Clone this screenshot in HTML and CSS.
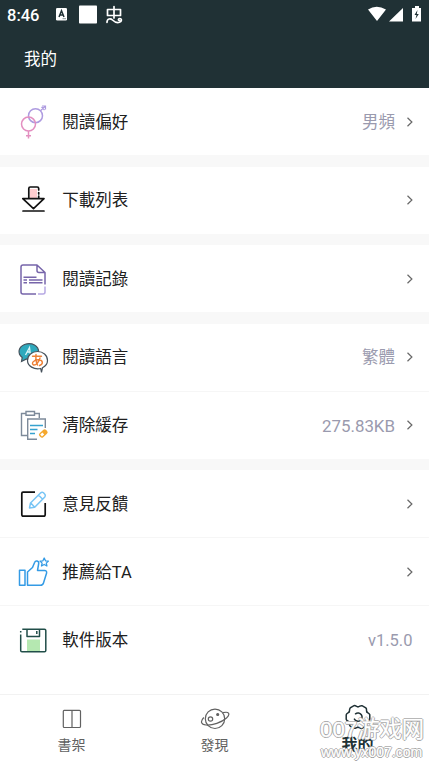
FILE: index.html
```html
<!DOCTYPE html>
<html lang="zh-Hant">
<head>
<meta charset="utf-8">
<meta name="viewport" content="width=device-width">
<title>我的</title>
<link rel="stylesheet" href="styles.css">
</head>
<body>
<header class="header">
  <div class="status">
    <span class="time">8:46</span>
    <svg class="status-left" viewBox="54 0 72 30" width="72" height="30">
      <rect x="56" y="8" width="11" height="12.500" rx="1.300" fill="#fff"/>
      <path d="M59 17 61.500 10.700 64 17M60 15H63" fill="none" stroke="#203135" stroke-width="1.500"/>
      <path d="M62.500 18.700H66" stroke="#8c999b" stroke-width="1"/>
      <rect x="79" y="5.500" width="18" height="18" rx=".8" fill="#fff"/>
      <g fill="none" stroke="#fff" stroke-width="1.700" stroke-linecap="round" stroke-linejoin="round"><path d="M114 6.500V18M107.500 9.500H120.500V15.500H107.500ZM107 22.300C107 18.500 110.500 18 112.500 20S117 23 119.500 22.300C122 21.500 122 18.500 119.800 18.500C118 18.500 118 20.500 119.500 20.500"/></g>
    </svg>
    <svg class="status-right" viewBox="366 0 58 30" width="58" height="30" fill="#fff">
      <path d="M368 9.500Q376.500 4 386 9.500L377 21ZM403 8V21.500H389ZM413.500 8H415V6H419V8H421V21.500H412V8Z"/>
      <path d="M417.500 10 414.500 15H416.500L415.500 19 418.800 14H416.800Z" fill="#203135"/>
    </svg>
  </div>
  <h1 class="title">我的</h1>
</header>

<main class="list">
  <section class="group">
    <div class="row">
      <svg class="icon" viewBox="16 104.500 34 34"><g fill="none" stroke-width="1.500"><circle cx="35.500" cy="115.200" r="7" stroke="#ae9be0"/><path d="M40.500 110.200 45.500 105.500M42 105.500H45.500V109M41.500 106.500 44.500 109.500" stroke="#ae9be0" stroke-width="1.200"/><circle cx="28.500" cy="123.600" r="7" stroke="#e38fc0"/><path d="M28.500 130.600V138M26 135.200H31" stroke="#e38fc0"/></g></svg>
      <span class="label">閱讀偏好</span><span class="value">男頻</span>
      <svg class="chevron" viewBox="0 0 8 12"><path d="M1.500 1.700 5.900 6 1.500 10.300"/></svg>
    </div>
  </section>
  <section class="group">
    <div class="row">
      <svg class="icon" viewBox="16 183 34 34"><path d="M30 198V189H37V198Z" fill="#ffcdcf"/><g fill="none" stroke="#111" stroke-width="1.700" stroke-linejoin="round" stroke-linecap="round"><path d="M28.800 198V188.500Q28.800 187 30.300 187H37.200Q38.700 187 38.700 188.500V190M38.700 192.500V194M38.700 196V198M22.800 198.700H44L33.500 208.700ZM23 211H44"/></g></svg>
      <span class="label">下載列表</span>
      <svg class="chevron" viewBox="0 0 8 12"><path d="M1.500 1.700 5.900 6 1.500 10.300"/></svg>
    </div>
  </section>
  <section class="group">
    <div class="row">
      <svg class="icon" viewBox="16 261.500 34 34"><g fill="none" stroke="#7765aa" stroke-width="1.500" stroke-linejoin="round"><path d="M45 284V272L37 264.500H23Q21 264.500 21 266.500V291.500Q21 293.500 23 293.500H36M37 264.500V270Q37 272 39 272H45M23.500 276.800H36.500M23.500 279.600H27M29 279.600H42.500M23.500 282.200H27M29 282.200H42.500"/><path d="M45 286V291.500Q45 293.500 43 293.500H38" stroke="#b7a9e4"/></g></svg>
      <span class="label">閱讀記錄</span>
      <svg class="chevron" viewBox="0 0 8 12"><path d="M1.500 1.700 5.900 6 1.500 10.300"/></svg>
    </div>
  </section>
  <section class="group">
    <div class="row">
      <svg class="icon" viewBox="16 340 34 34"><path d="M21.500 361.500 22.200 357.500C17 353.500 18.500 347 24.500 344.500C32 342 39 346 38.500 352C38 358 32 360 26.500 359Z" fill="#2ea9bd" stroke="#46515b" stroke-width="1.200"/><path d="M25.500 355 29.500 347.500 30.500 355M27 352H30" fill="none" stroke="#d8f5f8" stroke-width="1.300"/><path d="M41.500 372.500 40.700 368.500C34 370 27.500 366 27.500 360.500C27.500 355 32 351.500 37.500 351.500S47.500 355 47.500 360.500C47.500 364 45.500 366.200 42.500 367.700Z" fill="#fff" stroke="#46515b" stroke-width="1.200"/><g fill="none" stroke="#ee8137" stroke-width="1.400" stroke-linecap="round"><path d="M32.500 356.300H41.500M36 354.500C35.500 358 36 362 37.500 365M40 358C39 362 36 365.500 33.500 365C31 363.500 33.500 360 38 359.700C43.500 359.500 43.500 364.500 39.500 365.500"/></g></svg>
      <span class="label">閱讀語言</span><span class="value">繁體</span>
      <svg class="chevron" viewBox="0 0 8 12"><path d="M1.500 1.700 5.900 6 1.500 10.300"/></svg>
    </div>
    <div class="row">
      <svg class="icon" viewBox="16 408 34 34"><g fill="none" stroke="#7d8a9a" stroke-width="1.400"><path d="M26 413.500H21.500V435.500H27M34.500 413.500H39.300V418M26 411.500H34.500V415.300H26ZM45.300 428V419H27.700V439.300H37"/><path d="M30 425.500H43M30 429.500H37.500M30 433.500H35" stroke="#36a2cf"/></g><g transform="rotate(-42 43.300 433.500)"><rect x="38.800" y="430.800" width="9" height="5.400" rx="2" fill="#f5a82d"/><rect x="40.300" y="432.200" width="3" height="2.600" fill="#fff"/></g></svg>
      <span class="label">清除緩存</span><span class="value value-size">275.83KB</span>
      <svg class="chevron" viewBox="0 0 8 12"><path d="M1.500 1.700 5.900 6 1.500 10.300"/></svg>
    </div>
  </section>
  <section class="group">
    <div class="row">
      <svg class="icon" viewBox="16 486.500 34 34"><path d="M35 491.700H23Q21.800 491.700 21.800 492.900V514Q21.800 515.700 23.500 515.700H43.500Q45.200 515.700 45.200 514V502.500" fill="none" stroke="#111" stroke-width="1.700"/><path d="M29.500 507.500 30.500 502.500 40.500 492.500Q42 491 43.500 492.300L45 493.900Q45.700 495.300 44.800 496.500L34.700 506.700ZM30.800 502.500 34.500 506.500M38.500 494.500 42.700 498.700" fill="none" stroke="#78c5f5" stroke-width="1.500" stroke-linejoin="round"/></svg>
      <span class="label">意見反饋</span>
      <svg class="chevron" viewBox="0 0 8 12"><path d="M1.500 1.700 5.900 6 1.500 10.300"/></svg>
    </div>
    <div class="row">
      <svg class="icon" viewBox="16 554.500 34 34"><g fill="none" stroke="#349be5" stroke-width="1.500" stroke-linejoin="round"><path d="M19.500 569.700H25V584.800H19.500ZM27.500 571.500 32.500 567 34.700 561.800C35.500 559.700 39 560 38.700 563L37.500 570H44.500Q47 570 46.600 572.500L43.500 582.500Q42.800 584.800 40.500 584.800H27.500Z"/><path d="M44.200 557.500 45.500 560.300 48.400 560.600 46.300 562.600 46.900 565.500 44.200 564 41.500 565.500 42.100 562.600 40 560.600 42.900 560.300Z" stroke-width="1.300"/></g></svg>
      <span class="label">推薦給TA</span>
      <svg class="chevron" viewBox="0 0 8 12"><path d="M1.500 1.700 5.900 6 1.500 10.300"/></svg>
    </div>
    <div class="row">
      <svg class="icon" viewBox="16 622.500 34 34"><path d="M27 639H40V651H27Z" fill="#b5e8b1"/><g fill="none" stroke="#214e49" stroke-width="1.500" stroke-linejoin="round"><path d="M20.700 634V650Q20.700 651.300 22 651.300H44.500Q45.800 651.300 45.800 650V630Q45.800 628.700 44.500 628.700H22.300M20.700 632V630.500M27 629V636H39.500V629M36.800 630.500V633.500"/></g></svg>
      <span class="label">軟件版本</span><span class="value value-end">v1.5.0</span>
    </div>
  </section>
</main>

<nav class="tabs">
  <div class="tab">
    <svg class="tab-icon" viewBox="56.500 702 30 32"><path d="M63.300 710.300H79Q80 710.300 80 711.300V726.500Q80 727.500 79 727.500H63.800Q62.800 727.500 62.800 726.500V711.300Q62.800 710.300 63.800 710.300M71.500 710.300V728" fill="none" stroke="#616161" stroke-width="1.200"/></svg>
    <span>書架</span>
  </div>
  <div class="tab">
    <svg class="tab-icon" viewBox="199.500 702 30 32"><g fill="none" stroke="#616161" stroke-width="1.200"><circle cx="214.500" cy="718.800" r="9.700"/><circle cx="210" cy="719" r="2.200"/><circle cx="217.200" cy="714.500" r="1" fill="#616161"/><path d="M203.300 717.500C199.500 721.500 200.500 724.500 205.500 725C212 725.500 221 722.500 226 718C230.500 713.500 228 711.300 222.500 712.700"/></g></svg>
    <span>發現</span>
  </div>
  <div class="tab active">
    <svg class="tab-icon" viewBox="-15 -15 30 32"><defs><path id="lobe" d="M0-10.200C1.800-10.200 2.200-11.700 4-11.300L7.800-9.100C9.200-7.900 8-6.800 8.830-5.100"/></defs><g fill="none" stroke="#203135" stroke-width="1.500" stroke-linecap="round"><use href="#lobe"/><use href="#lobe" transform="rotate(60)"/><use href="#lobe" transform="rotate(120)"/><use href="#lobe" transform="rotate(180)"/><use href="#lobe" transform="rotate(240)"/><use href="#lobe" transform="rotate(300)"/><path d="M-2.500-3.200A4.100 4.100 0 1 1-3.600 2.100"/></g></svg>
    <span>我的</span>
  </div>
  <div class="watermark"><span class="mark-name">007游戏网</span><span class="mark-url">www.yx007.com</span></div>
</nav>
</body>
</html>
```

FILE: styles.css
```css
* { box-sizing: border-box; }
body {
  margin: 0;
  height: 762px;
  display: flex;
  flex-direction: column;
  overflow: hidden;
  background: #fff;
  color: #202020;
  font-family: Roboto, "Noto Sans CJK SC", sans-serif;
}
.header { height: 88px; flex: none; background: #203135; color: #fff; }
.status { height: 30px; display: flex; align-items: center; padding: 0 5px 0 7px; }
.time { width: 47px; padding-top: 1px; font-size: 16.500px; font-weight: 500; line-height: 30px; }
.status-left { margin-left: -.5px; }
.status-right { margin-left: auto; }
.title { margin: 0; padding-left: 24px; font-size: 16.500px; font-weight: 400; line-height: 60px; }
.list { flex: none; display: flex; flex-direction: column; gap: 11.500px; background: #f8f8f8; }
.group { background: #fff; }
.row { height: 67px; display: flex; align-items: center; padding: 0 15.500px 0 16px; }
.row + .row { height: 68px; border-top: 1px solid #f6f6f6; }
.icon { width: 34px; height: 34px; margin-right: 12.300px; flex: none; }
.label { padding-top: 2px; font-size: 16.500px; line-height: 24px; }
.value { margin-left: auto; padding-top: 2px; font-size: 16.500px; line-height: 24px; color: #9a9aae; }
.value-size { padding-top: 1px; font-size: 16.900px; }
.value-end { padding-right: 1px; }
.chevron { width: 8px; height: 12px; margin-left: auto; fill: none; stroke: #686868; stroke-width: 1.200; }
.value + .chevron { margin-left: 10.500px; }
.tabs { position: relative; height: 68px; margin-top: auto; display: flex; border-top: 1px solid #f2f2f2; background: #fff; }
.tab { flex: 1; display: flex; flex-direction: column; align-items: center; padding-top: 7px; color: #616161; font-size: 14px; line-height: 20px; }
.tab-icon { width: 30px; height: 32px; margin-bottom: 1px; }
.active { color: #203135; font-size: 16px; font-weight: 700; }
.watermark {
  position: absolute;
  left: 320px;
  top: 21px;
  width: 106px;
  color: #fff;
  font-family: "Liberation Sans", "Noto Sans CJK SC", sans-serif;
  white-space: nowrap;
  -webkit-text-stroke: .4px #fff;
  text-shadow: 1px 0 #999, -1px 0 #999, 0 1px #999, 0 -1px #999;
}
.mark-name { display: block; font-size: 22.300px; line-height: 28px; }
.mark-url { display: block; padding-left: 1px; font-size: 14px; line-height: 16px; }
```
